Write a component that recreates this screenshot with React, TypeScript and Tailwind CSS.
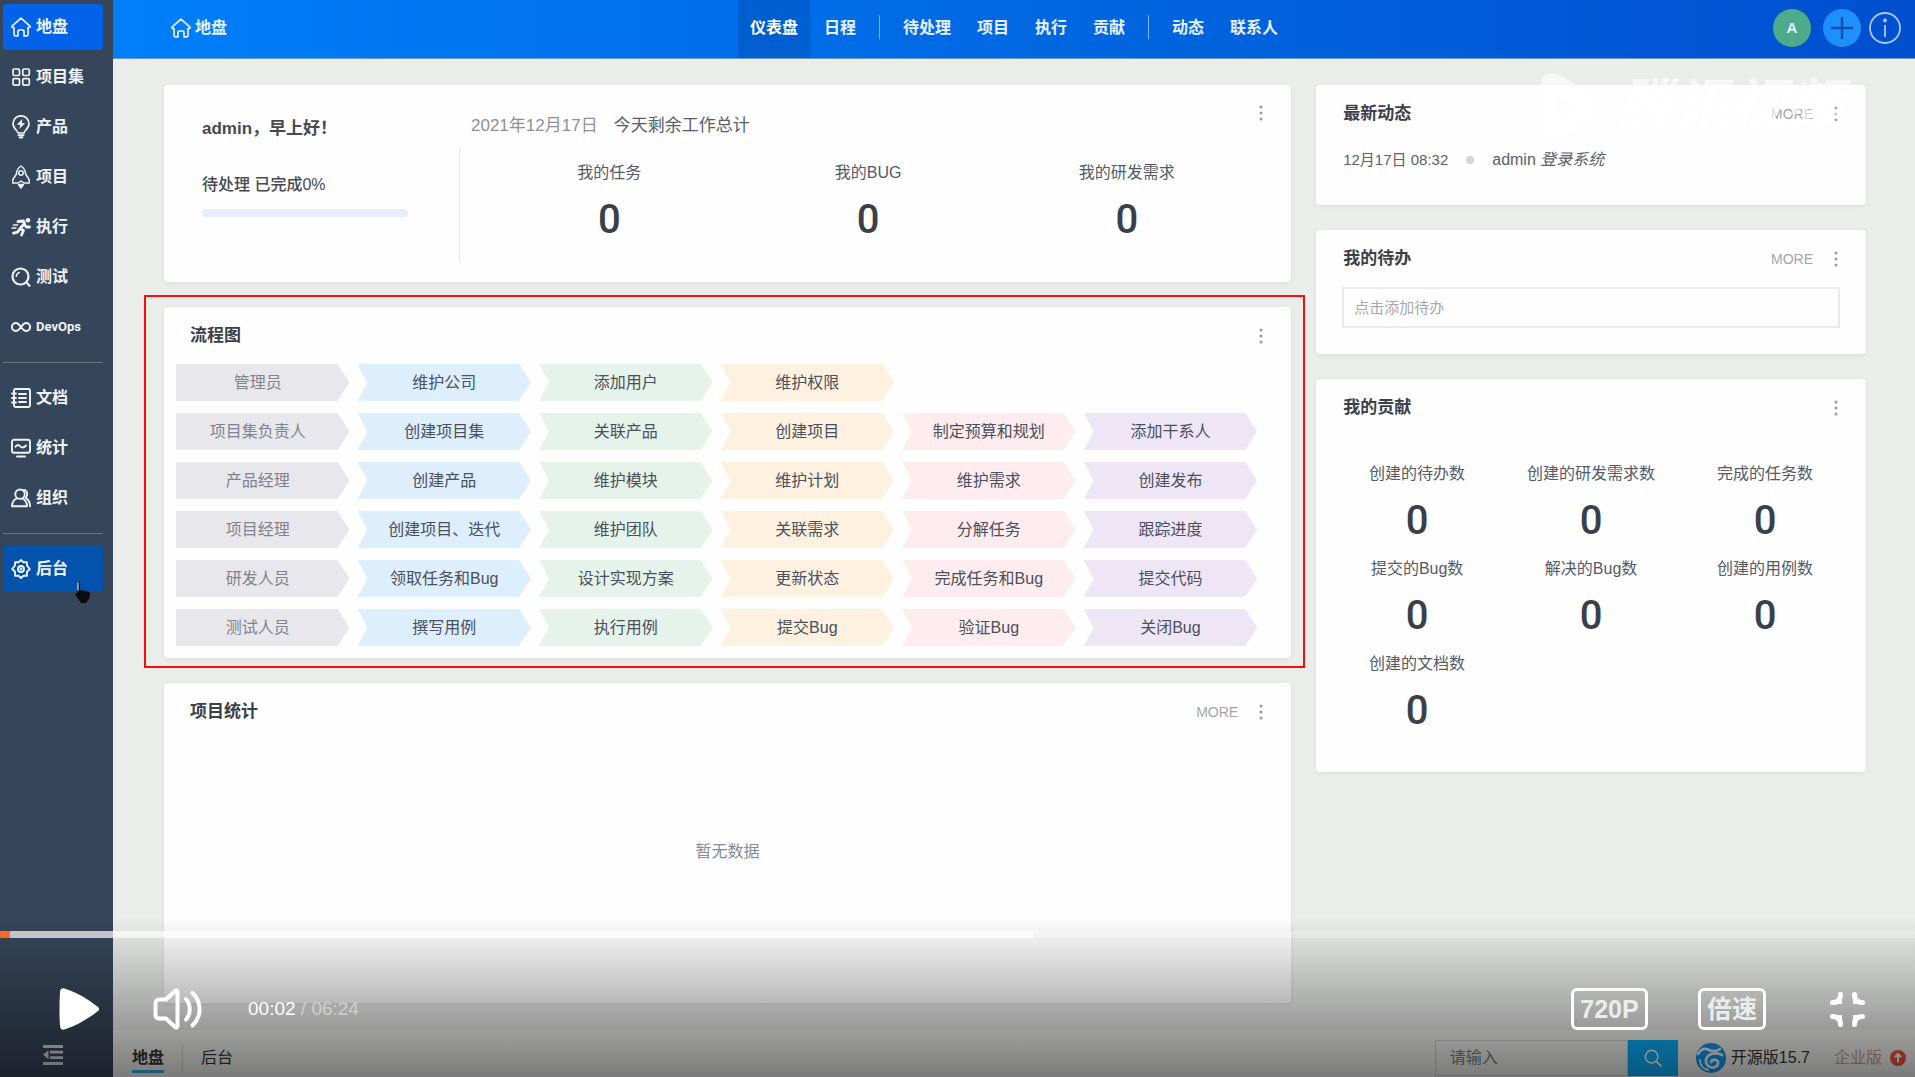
import { ReactNode } from "react";
import clsx from "clsx";

interface IconProps {
  className?: string;
}

interface MenuItem {
  label: string;
  icon: ReactNode;
  state?: "active" | "hover";
}

const strokeProps = {
  viewBox: "0 0 20 20",
  fill: "none",
  stroke: "currentColor",
  strokeWidth: 1.7,
  strokeLinecap: "round" as const,
  strokeLinejoin: "round" as const,
};

function HomeIcon({ className = "size-5" }: IconProps) {
  return (
    <svg {...strokeProps} className={className}>
      <path d="M10 1.2 1 9.2c-.3.6 0 1.2.7 1.3H3v7c0 .8.5 1.3 1.3 1.3H7v-4.6c0-.7.4-1.2 1.1-1.2h3.8c.7 0 1.1.5 1.1 1.2v4.6h2.7c.8 0 1.3-.5 1.3-1.3v-7h1.3c.7-.1 1-.7.7-1.3z" />
    </svg>
  );
}

function GridIcon() {
  return (
    <svg {...strokeProps} className="size-5">
      <rect x="2" y="2" width="6.5" height="6.5" rx="1.2" />
      <rect x="11.8" y="2" width="6.5" height="6.5" rx="1.2" />
      <rect x="2" y="11.6" width="6.5" height="6.5" rx="1.2" />
      <rect x="11.8" y="11.6" width="6.5" height="6.5" rx="1.2" />
    </svg>
  );
}

function BulbIcon() {
  return (
    <svg {...strokeProps} viewBox="0 0 20 24" className="h-6 w-5">
      <path d="M7 18c0-2-5-4.5-5-9.2a8 8 0 0 1 16 0c0 4.7-5 7.2-5 9.2z" />
      <path d="M7.5 20.3h5M8.8 22.6h2.4" strokeWidth={2} />
      <path d="M11.5 3.8 5.8 9.8h3.4l-.9 4.2 5.9-6h-3.5z" fill="currentColor" stroke="none" />
    </svg>
  );
}

function RocketIcon() {
  return (
    <svg {...strokeProps} strokeWidth={1.5} viewBox="0 0 20 24" className="h-6 w-5">
      <path d="M10 1c3 2 4.5 4.500 4.500 8l3 4.500c1 1.500 1.200 3 .8 4.500H13l-3-2-3 2H1.700c-.4-1.500-.2-3 .8-4.500l3-4.500C5.500 5.500 7 3 10 1z" />
      <circle cx="10" cy="8" r="2.2" />
      <path d="M7.5 19.5h5L10 23z" fill="currentColor" />
    </svg>
  );
}

function RunIcon() {
  return (
    <svg {...strokeProps} strokeWidth={2.8} className="size-5">
      <circle cx="17" cy="3.3" r="2.3" fill="currentColor" stroke="none" />
      <path d="M7 4.5 12.5 4l1 2.500-4.500 5 3.500 2-2 4.500M13.500 7.500l1.800 2.500h3.200M8.500 12.500l-2 2.700-4 1" />
      <path d="M2.5 8h4.2M1 11h4" strokeWidth={1.4} />
    </svg>
  );
}

function TestIcon() {
  return (
    <svg {...strokeProps} strokeWidth={2.2} className="size-5">
      <circle cx="9.5" cy="9.5" r="8" />
      <path d="m15.3 15.3 3.2 3.4" />
      <path d="M5.3 9.3c.2-1.9 1.3-3.2 3-3.8" strokeWidth={1.5} />
    </svg>
  );
}

function InfinityIcon() {
  return (
    <svg {...strokeProps} strokeWidth={2} className="size-5">
      <path d="M10 10C8.2 7.5 6.700 6 4.900 6a4 4 0 0 0 0 8c1.800 0 3.300-1.500 5.100-4 1.800-2.500 3.300-4 5.100-4a4 4 0 0 1 0 8c-1.800 0-3.300-1.500-5.100-4z" />
    </svg>
  );
}

function DocIcon() {
  return (
    <svg {...strokeProps} strokeWidth={1.9} className="size-5">
      <rect x="3" y="1" width="16" height="18" rx="1.5" />
      <path d="M8 6h7M8 10h7M8 14h7M1 5.5h4M1 10h4M1 14.5h4" />
    </svg>
  );
}

function MonitorIcon() {
  return (
    <svg {...strokeProps} strokeWidth={1.9} className="size-5">
      <rect x="1" y="1.8" width="18" height="13" rx="2" />
      <path d="M4.5 8.8c1.5-2.3 3-2.3 4.500-.6s3.500 2 6-.7M6 18.500h8" />
    </svg>
  );
}

function UsersIcon() {
  return (
    <svg {...strokeProps} strokeWidth={1.9} className="size-5">
      <circle cx="9" cy="6.2" r="4.7" />
      <path d="M5.5 10.5C2.5 12 1 14.5 1 18.300h15c0-3.800-1.500-6.300-4.500-7.800" />
      <path d="M13 1.8c3.7 1 4.300 5.700 1.500 8 2.800 1.500 4.500 4 4.500 8.500" />
    </svg>
  );
}

function GearIcon() {
  return (
    <svg {...strokeProps} strokeWidth={1.9} className="size-5">
      <path d="m10 1 2.5 2.2 3.4-.1.1 3.4L18.800 10 16 12.700l-.1 4-3.400.1L10 19l-2.500-2.200-3.400-.1-.1-4L1.200 10 4 6.500l.1-3.400 3.400.1z" />
      <circle cx="10" cy="10" r="3" />
      <circle cx="10" cy="10" r=".5" />
    </svg>
  );
}

const mainMenu: MenuItem[] = [
  { label: "地盘", icon: <HomeIcon />, state: "active" },
  { label: "项目集", icon: <GridIcon /> },
  { label: "产品", icon: <BulbIcon /> },
  { label: "项目", icon: <RocketIcon /> },
  { label: "执行", icon: <RunIcon /> },
  { label: "测试", icon: <TestIcon /> },
  { label: "DevOps", icon: <InfinityIcon /> },
];

const toolMenu: MenuItem[] = [
  { label: "文档", icon: <DocIcon /> },
  { label: "统计", icon: <MonitorIcon /> },
  { label: "组织", icon: <UsersIcon /> },
];

const adminMenu: MenuItem[] = [{ label: "后台", icon: <GearIcon />, state: "hover" }];

const navGroups = [
  ["仪表盘", "日程"],
  ["待处理", "项目", "执行", "贡献"],
  ["动态", "联系人"],
];

const flowRows = [
  ["管理员", "维护公司", "添加用户", "维护权限"],
  ["项目集负责人", "创建项目集", "关联产品", "创建项目", "制定预算和规划", "添加干系人"],
  ["产品经理", "创建产品", "维护模块", "维护计划", "维护需求", "创建发布"],
  ["项目经理", "创建项目、迭代", "维护团队", "关联需求", "分解任务", "跟踪进度"],
  ["研发人员", "领取任务和Bug", "设计实现方案", "更新状态", "完成任务和Bug", "提交代码"],
  ["测试人员", "撰写用例", "执行用例", "提交Bug", "验证Bug", "关闭Bug"],
];

const flowColors = [
  "bg-[#e8e8ec] text-[#7f8390] pr-2.5 [clip-path:polygon(0_0,calc(100%-12px)_0,100%_50%,calc(100%-12px)_100%,0_100%)]",
  "bg-[#ddeefd]",
  "bg-[#e5f3ea]",
  "bg-[#fef1df]",
  "bg-[#feecee]",
  "bg-[#efe6f5]",
];

const workStats = ["我的任务", "我的BUG", "我的研发需求"];

const contributions = [
  "创建的待办数",
  "创建的研发需求数",
  "完成的任务数",
  "提交的Bug数",
  "解决的Bug数",
  "创建的用例数",
  "创建的文档数",
];

function MenuList({ items }: { items: MenuItem[] }) {
  return (
    <ul className="flex flex-col gap-1">
      {items.map((item) => (
        <li key={item.label}>
          <a
            href="#"
            className={clsx(
              "flex h-[46px] items-center gap-[5px] rounded-sm pl-2 font-bold text-[#eef3fa]",
              item.state === "active" && "bg-[#0263ea]",
              item.state === "hover" && "bg-[#0352ab]",
              item.label === "DevOps" && "font-['Roboto',sans-serif] text-[13px]"
            )}
          >
            {item.icon}
            {item.label}
          </a>
        </li>
      ))}
    </ul>
  );
}

function Sidebar() {
  return (
    <aside className="flex w-[113px] shrink-0 flex-col bg-[#36465a] pt-1 pr-2.5 pl-[3px]">
      <MenuList items={mainMenu} />
      <hr className="my-3 border-[#66727f]" />
      <MenuList items={toolMenu} />
      <hr className="my-3 border-[#66727f]" />
      <div className="relative">
        <MenuList items={adminMenu} />
        {/* Mouse pointer */}
        <svg viewBox="0 0 18 24" className="absolute top-[34px] left-[71px] h-6 w-[18px]">
          <path
            d="M4 2c1.3 0 2 .7 2 2v6l8 1.5c1.600.4 2.300 1.500 2 3l-1 4.500-3 4H7L1.500 15c-.5-1.500.6-2.500 2-1.700V4"
            fill="#0b0c10"
          />
          <path d="M4 2.5v8" stroke="#c7d8ee" strokeWidth="1.3" />
        </svg>
      </div>
      <button type="button" aria-label="收起菜单" className="mt-auto mb-3 ml-10 w-5 text-[#d5dade]">
        <svg viewBox="0 0 20 20" fill="currentColor" className="size-5">
          <path d="M0 0h20v3H0zM7 5.700h13v2.800H7zM7 11.200h13V14H7zM0 17h20v3H0zM5.500 5.300v9L0 9.800z" />
        </svg>
      </button>
    </aside>
  );
}

function Header() {
  return (
    <header className="grid h-[59px] shrink-0 grid-cols-[1fr_auto_1fr] items-stretch border-b border-[#6d9cc4] bg-linear-to-r from-[#007ffa] via-[#0068e2] to-[#004fcf] text-[#e8f2ff]">
      <div className="flex items-center pb-0.5 pl-[58px]">
        <a href="#" className="flex items-center gap-1 font-bold">
          <HomeIcon />
          地盘
        </a>
      </div>
      <nav className="flex items-center gap-0.5 font-bold">
        {navGroups.map((group, groupIndex) => (
          <div key={group[0]} className="flex h-full items-center gap-0.5">
            {groupIndex > 0 && <span className="mx-[9px] mb-1 h-6 w-px bg-[#79b4f5]" />}
            {group.map((label) => (
              <a
                key={label}
                href="#"
                className={clsx(
                  "flex h-full items-center px-3 pb-0.5",
                  label === "仪表盘" && "bg-[#005fd0] text-white"
                )}
              >
                {label}
              </a>
            ))}
          </div>
        ))}
      </nav>
      <div className="flex items-center justify-end pr-3.5 pb-0.5">
        <button type="button" className="mr-3 size-[38px] rounded-full bg-[#4dab8b] text-[15px] font-bold">
          A
        </button>
        <button
          type="button"
          aria-label="新增"
          className="mr-2 flex size-[38px] items-center justify-center rounded-full bg-[#1f90fb] text-[#0a4fb5]"
        >
          <svg viewBox="0 0 22 22" stroke="currentColor" strokeWidth="2.4" className="size-[22px]">
            <path d="M11 0v22M0 11h22" />
          </svg>
        </button>
        <button type="button" aria-label="关于" className="text-[#a9c9f5]">
          <svg viewBox="0 0 32 32" fill="none" stroke="currentColor" strokeWidth="1.8" className="size-8">
            <circle cx="16" cy="16" r="15" />
            <path d="M16 13v12" />
            <circle cx="16" cy="8.5" r="1" fill="currentColor" />
          </svg>
        </button>
      </div>
    </header>
  );
}

function Card({ className, children }: { className?: string; children: ReactNode }) {
  return (
    <section className={clsx("relative rounded bg-[#fdfefd] shadow-[0_1px_4px_rgba(0,0,0,0.07)]", className)}>
      {children}
    </section>
  );
}

function MoreDots() {
  return (
    <button type="button" aria-label="更多操作" className="text-[#9b9fa4]">
      <svg viewBox="0 0 4 16" fill="currentColor" className="h-4 w-1">
        <circle cx="2" cy="2" r="1.6" />
        <circle cx="2" cy="8" r="1.6" />
        <circle cx="2" cy="14" r="1.6" />
      </svg>
    </button>
  );
}

function CardHeader({ title, more, className }: { title: string; more?: boolean; className?: string }) {
  return (
    <div className={clsx("flex h-[57px] items-center pr-7", className)}>
      <h2 className="flex-1 text-[17px] font-bold text-[#3c4048]">{title}</h2>
      {more && (
        <a href="#" className="mr-[21px] text-sm text-[#a3a5ab]">
          MORE
        </a>
      )}
      <MoreDots />
    </div>
  );
}

function Stat({ label }: { label: string }) {
  return (
    <div className="flex flex-col items-center gap-[15px]">
      <span className="leading-6 text-[#555a66]">{label}</span>
      <span className="font-['Roboto',sans-serif] text-[40px] leading-10 font-medium text-[#3a404a]">0</span>
    </div>
  );
}

function WelcomeCard() {
  return (
    <Card className="flex h-[197px]">
      <div className="w-[295px] pt-8 pl-[38px]">
        <h2 className="text-[17px] leading-6 font-bold text-[#474a50]">admin，早上好！</h2>
        <p className="mt-8 leading-6 font-medium text-[#474a50]">待处理 已完成0%</p>
        <div className="mt-3 h-2 w-[206px] rounded-sm bg-[#e7eef9]" />
      </div>
      <div className="flex flex-1 flex-col">
        <p className="flex h-16 items-center gap-4 pt-[18px] pl-3 text-[17px] text-[#5a5d63]">
          <span className="text-[#8e919c]">2021年12月17日</span>
          今天剩余工作总计
        </p>
        <div className="mb-5 grid flex-1 grid-cols-3 border-l border-[#e4e6e6] pt-3 pr-[35px] pl-5">
          {workStats.map((label) => (
            <Stat key={label} label={label} />
          ))}
        </div>
      </div>
      <div className="absolute top-5 right-7 flex">
        <MoreDots />
      </div>
    </Card>
  );
}

function FlowChartCard() {
  return (
    <Card className="h-[351px]">
      <CardHeader title="流程图" className="pl-[26px]" />
      <div className="flex flex-col gap-3 pr-[34px] pl-3">
        {flowRows.map((row) => (
          <div key={row[0]} className="grid grid-cols-6 gap-2">
            {row.map((step, index) => (
              <div
                key={step}
                className={clsx(
                  "flex h-[37px] items-center justify-center",
                  flowColors[index],
                  index > 0 &&
                    "text-[#4a505d] [clip-path:polygon(0_0,calc(100%-12px)_0,100%_50%,calc(100%-12px)_100%,0_100%,10px_50%)]"
                )}
              >
                {step}
              </div>
            ))}
          </div>
        ))}
      </div>
      {/* Highlight frame */}
      <div className="pointer-events-none absolute -top-3 -right-3.5 -bottom-2.5 -left-5 border-2 border-[#fb0b0b]" />
    </Card>
  );
}

function ProjectStatsCard() {
  return (
    <Card className="h-80">
      <CardHeader title="项目统计" more className="pl-[26px]" />
      <p className="pt-[100px] text-center text-[#868b98]">暂无数据</p>
    </Card>
  );
}

function Watermark() {
  return (
    <div className="pointer-events-none absolute -top-3 right-6 flex items-center gap-4 text-white/60">
      <svg viewBox="0 0 72 66" className="h-[66px] w-[72px]">
        <path
          d="M12 4c3-4 12-5 19-1 10 5 22 14 34 24 5 4 5 9 0 13-11 10-22 18-34 24-9 4-17 1-19-6C7 46 8 22 12 4zm14 19c-1 8-1 14 0 22 8-3 14-7 20-11-6-5-12-8-20-11z"
          fill="currentColor"
          fillRule="evenodd"
        />
      </svg>
      <span className="text-[56px] leading-[66px] font-bold italic">腾讯视频</span>
    </div>
  );
}

function SideCards() {
  return (
    <div className="flex flex-col gap-[25px]">
      <Card className="h-[120px]">
        <CardHeader title="最新动态" more className="pl-[27px]" />
        <div className="flex items-center pt-1.5 pl-[27px] text-[#5c6068]">
          <span className="text-[15px]">12月17日 08:32</span>
          <span className="mx-[18px] size-2 rounded-full bg-[#d4d6d6]" />
          <span>
            admin <i>登录系统</i>
          </span>
        </div>
        <Watermark />
      </Card>

      <Card className="h-[124px]">
        <CardHeader title="我的待办" more className="pl-[27px]" />
        <div className="px-[26px]">
          <input
            type="text"
            aria-label="添加待办"
            placeholder="点击添加待办"
            className="h-[41px] w-full border-2 border-[#eaecec] px-2.5 text-[15px] placeholder:text-[#a6a8ab]"
          />
        </div>
      </Card>

      <Card className="h-[393px]">
        <CardHeader title="我的贡献" className="pl-[27px]" />
        <div className="grid grid-cols-3 gap-y-4 px-3.5 pt-[26px]">
          {contributions.map((label) => (
            <Stat key={label} label={label} />
          ))}
        </div>
      </Card>
    </div>
  );
}

function Footer() {
  return (
    <footer className="flex h-[47px] shrink-0 items-center bg-[#f4f6f3] pt-2 pl-[19px] text-[#333]">
      <a href="#" className="border-b-[3px] border-[#2fb4e8] pt-1 leading-6 font-bold">
        地盘
      </a>
      <span className="mx-[18px] h-7 w-px bg-[#d5d5d5]" />
      <a href="#">后台</a>
      <form className="ml-auto flex h-9" onSubmit={(e) => e.preventDefault()}>
        <input
          type="text"
          aria-label="搜索"
          placeholder="请输入"
          className="w-[193px] border border-[#cfd1d1] px-3.5 placeholder:text-[#7c7f86]"
        />
        <button type="submit" aria-label="搜索" className="flex w-[50px] items-center justify-center bg-[#0bb0ff] text-white">
          <svg {...strokeProps} className="size-[18px]">
            <circle cx="8.5" cy="8.5" r="7" />
            <path d="m14 14 5 5" />
          </svg>
        </button>
      </form>
      <a href="#" className="ml-[17px] flex items-center gap-1">
        <svg viewBox="0 0 32 32" className="size-8">
          <circle cx="16" cy="16" r="15" fill="#0a9cf5" />
          <g fill="none" stroke="#f4f8fa" strokeLinecap="round">
            <path d="M3 12c3-5 7-6 11-4s8 1 11-1" strokeWidth="2.600" />
            <path d="M27 13c-5-3-15-2-16 5-1 8 10 10 12 4 1-4-5-6-7-2" strokeWidth="2.800" />
            <path d="M5 18c0 5 3 9 8 10" strokeWidth="1.800" />
          </g>
        </svg>
        开源版15.7
      </a>
      <a href="#" className="mr-[9px] ml-6 flex items-center gap-2 text-[#c9a08f]">
        企业版
        <svg viewBox="0 0 16 16" className="size-4">
          <circle cx="8" cy="8" r="8" fill="#f5503f" />
          <path d="M8 12.500V5M4.800 7.300 8 4l3.200 3.300" fill="none" stroke="#fff" strokeWidth="2" />
        </svg>
      </a>
    </footer>
  );
}

function PlayerControls() {
  return (
    <div className="absolute inset-x-0 bottom-0 flex h-40 flex-col bg-linear-to-b from-transparent to-black/50 pt-3.5 font-['Liberation_Sans','Noto_Sans_CJK_SC',sans-serif] text-white">
      <div className="flex h-[7px] bg-white/25">
        <div className="w-2.5 bg-[#ff6a22]" />
        <div className="w-[53.4%] bg-white/60" />
      </div>
      <div className="flex items-center pt-[50px] pr-[50px] pl-[59px]">
        <button type="button" aria-label="播放">
          <svg viewBox="0 0 41 42" fill="currentColor" className="h-[42px] w-[41px]">
            <path d="M1 4c.3-3 2-4.300 5-3.300 12 4 22 9.500 33 18.300 1.500 1.300 1.500 2.700 0 4C28 31.500 18 37.300 6 41.300c-3 1-4.700-.3-5-3.300C.3 27 .3 15 1 4z" />
          </svg>
        </button>
        <button type="button" aria-label="音量" className="ml-[53px]">
          <svg
            viewBox="0 0 49 42"
            fill="none"
            stroke="currentColor"
            strokeWidth="4"
            strokeLinecap="round"
            strokeLinejoin="round"
            className="h-[42px] w-[49px]"
          >
            <path d="M13 11.500H6.500C4 11.500 2.500 13 2.500 15.500v11c0 2.500 1.500 4 4 4H13l9 8.500c1.300.9 2.500.4 2.500-1V4c0-1.400-1.200-1.900-2.500-1z" />
            <path d="M33 11c5 5.500 5 15 0 20.500M39.500 5c9.500 9.500 9.500 23 0 32.500" />
          </svg>
        </button>
        <div className="ml-[46px] text-[19px] whitespace-pre">
          00:02<span className="text-[#cfcfcf]"> / 06:24</span>
        </div>
        <button
          type="button"
          className="ml-auto h-[42px] w-[77px] rounded-md border-[3px] border-white text-[25px] leading-9 font-bold text-[#ececec]"
        >
          720P
        </button>
        <button
          type="button"
          className="ml-[50px] h-[42px] w-[68px] rounded-md border-[3px] border-white text-[25px] leading-9 font-bold whitespace-nowrap text-[#ececec]"
        >
          倍速
        </button>
        <button type="button" aria-label="退出全屏" className="ml-16">
          <svg
            viewBox="0 0 35 35"
            fill="none"
            stroke="currentColor"
            strokeWidth="5"
            strokeLinecap="round"
            className="size-[35px]"
          >
            <path d="M10.500 2.500c0 5-3 8-8 8M24.500 2.500c0 5 3 8 8 8M2.500 24.500c5 0 8 3 8 8M32.500 24.500c-5 0-8 3-8 8" />
            <path
              d="M7 10.500c2-.5 3.500-2 3.500-4v4zM28 10.500c-2-.5-3.500-2-3.500-4v4zM7 24.500c2 .5 3.500 2 3.500 4v-4zM28 24.500c-2 .5-3.500 2-3.500 4v-4z"
              strokeWidth="3"
            />
          </svg>
        </button>
      </div>
    </div>
  );
}

export default function App() {
  return (
    <div className="relative flex min-h-screen overflow-hidden bg-[#ebedeb] font-['Liberation_Sans','Noto_Sans_CJK_SC',sans-serif] text-base">
      <Sidebar />
      <div className="flex min-w-0 flex-1 flex-col">
        <Header />
        <main className="grid flex-1 grid-cols-[41fr_20fr] items-start gap-[25px] pt-[26px] pr-[49px] pb-6 pl-[51px]">
          <div className="flex flex-col gap-[25px]">
            <WelcomeCard />
            <FlowChartCard />
            <ProjectStatsCard />
          </div>
          <SideCards />
        </main>
        <Footer />
      </div>
      <PlayerControls />
    </div>
  );
}
